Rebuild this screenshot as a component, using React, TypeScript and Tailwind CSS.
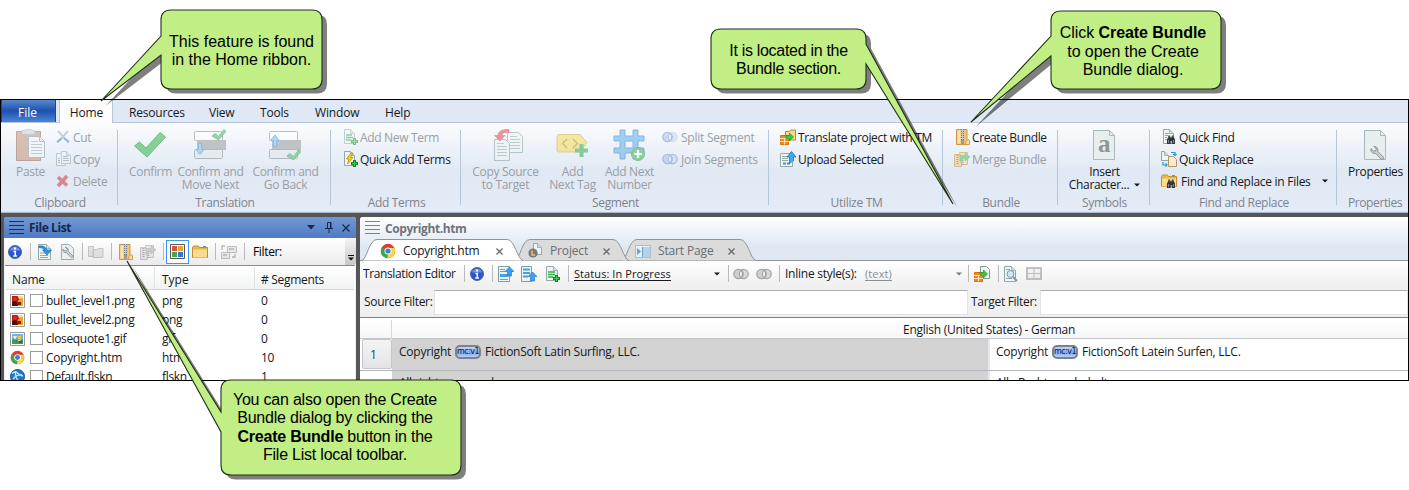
import type { ReactNode } from "react";

type Kids = { children?: ReactNode };

/* ---------- icon canvas ---------- */
function Ico({ w = 16, h = 16, c = "", dim = false, children }: Kids & { w?: number; h?: number; c?: string; dim?: boolean }) {
  return (
    <svg width={w} height={h} viewBox={`0 0 ${w} ${h}`} className={`shrink-0 ${dim ? "opacity-50" : ""} ${c}`} fill="none">
      {children}
    </svg>
  );
}

/* ---------- shared drawings ---------- */
const Zip = () => (
  <>
    <path d="M.5.5h10.500v15H.5z" fill="#efc577" stroke="#c9964a" />
    <path d="M1.500 1.500h3v13h-3z" fill="#fbe2ae" />
    <path d="M9.500 15.500l.5-3 2-2 1.500 1v4z" fill="#f9dfa6" stroke="#d09a45" />
    <path d="M6.500 0v11" stroke="#6d737c" strokeWidth="3" strokeDasharray="1 1" />
    <path d="M6.500 0v11" stroke="#c5c9cf" strokeWidth="1" />
    <path d="M5.500 11h2v3.500h-2z" fill="#a2a7ae" stroke="#70757d" strokeWidth=".5" />
  </>
);
const ZipMerge = () => (
  <>
    <path d="M.5 3.500h7v12h-7z" fill="#f3cd80" stroke="#c98f2c" />
    <path d="M5.500 1.500h8v12h-6z" fill="#f8dc9b" stroke="#c98f2c" />
    <path d="M3.500 4v9M8.500 5v10" stroke="#5d6470" strokeWidth="2" strokeDasharray="1 1" />
    <path d="M6 4.500h5V2l5 4-5 4V7.500H8.500V10H6z" fill="#45c25a" stroke="#2a9a3c" strokeWidth=".6" />
  </>
);
const Page = ({ x = 1, y = 0, w = 12, h = 15 }: { x?: number; y?: number; w?: number; h?: number }) => (
  <>
    <path d={`M${x + 0.5} ${y + 0.5}h${w - 5}l4 4v${h - 5}h-${w - 1}z`} fill="#eef5f4" stroke="#8fa8a8" />
    <path d={`M${x + w - 4.5} ${y + 0.5}v4h4`} fill="#cfdedd" stroke="#8fa8a8" strokeWidth=".8" />
  </>
);
const GreenPlus = () => (
  <>
    <path d="M10.500 9v7M7 12.500h7" stroke="#12851c" strokeWidth="3" />
    <path d="M10.500 10v5M8 12.500h5" stroke="#3ed04a" strokeWidth="1" />
  </>
);
const Scissors = () => (
  <>
    <path d="M2 1l8 9M12 1L4 10" stroke="#909aa5" strokeWidth="1.800" />
    <path d="M4 9.500l-2.500 3M10 9.500l2.500 3M6 8L1 12M8 8l5 4" stroke="#2f6fc4" strokeWidth="1.700" />
  </>
);
const Copies = () => (
  <>
    <Page x={0} y={2} w={10} h={13} />
    <Page x={5} y={0} w={10} h={13} />
    <path d="M7 5.500h5M7 7.500h6M7 9.500h6M2 7.500h2M2 9.500h2M2 11.500h2" stroke="#7b9292" />
  </>
);
const RedX = () => <path d="M2 3l9 8.500M11 2L2 12" stroke="#d0262c" strokeWidth="3.600" />;
const Bars = () => (
  <>
    <path d="M.5 6.500h8v9h-8z" fill="#f28a1e" stroke="#d9700f" />
    <path d="M0 9.500h9M0 12.500h9M4.500 9.500v6" stroke="#fde3c4" />
  </>
);
const TranslateTm = () => (
  <>
    <path d="M5.500 2.500h4l1-1.500h5v10h-10z" fill="#f9dc8c" stroke="#b88a2b" />
    <Bars />
    <path d="M6 6.500h3.500V4l4 4-4 4V9.500H6z" fill="#3ec43f" stroke="#1c8726" strokeWidth=".6" />
  </>
);
const UploadSel = () => (
  <>
    <path d="M.5 2.500h12v13H.5z" fill="#eef5f4" stroke="#8fa8a8" />
    <path d="M2 5.500h6M2 7.500h6M2 9.500h6" stroke="#8fa8a8" />
    <path d="M3 11.500h3v2H3zM7 11.500h3v2H7z" fill="#3b8fe0" />
    <path d="M9.500 13V6H7L11.500 .5 16 6h-2.500v4" fill="#42a5ee" stroke="#1b70bd" strokeWidth=".8" />
  </>
);
const Rings = ({ gray = false, cut = false }: { gray?: boolean; cut?: boolean }) => (
  <>
    <circle cx="10.500" cy="6" r="4.700" fill={gray ? "#d9d9d9" : "#c3d3f5"} stroke={cut ? "#c4cedf" : gray ? "#a5a5a5" : "#6c86d6"} strokeWidth="1.300" />
    <circle cx="5.500" cy="6" r="4.700" fill={gray ? "#cfcfcf" : "#a8bdf0"} stroke={gray ? "#a5a5a5" : "#6c86d6"} strokeWidth="1.300" />
    <path d="M8 2c2 2.500 2 5.500 0 8-2-2.500-2-5.500 0-8z" fill="#f4f6fa" stroke={gray ? "#999" : "#6c86d6"} />
  </>
);
const Binoculars = () => (
  <>
    <path d="M7 8.500l.5-2H9l.5 2h1l.5-2h1.500l.5 2 1 2V15h-3.300v-3h-1v3H6v-4.500z" fill="#33373c" />
    <path d="M7.500 11v3M12.500 11v3M8 7.500v1M12 7.500v1" stroke="#8b929b" strokeWidth=".9" />
  </>
);
const Folder = () => (
  <>
    <path d="M.5 3.500l1-1.500h5l1 1.500h8v10H.5z" fill="#e9b94f" stroke="#bf8f31" />
    <path d="M1 5.500h14v8H1z" fill="#fbdc8e" />
    <path d="M11 2.500h3" stroke="#4a9be0" />
  </>
);
const Wrench = () => (
  <path d="M4 1.500L6.500 4 5.500 6 3.500 6 1 3.800C.4 6.500 2.500 9 5.500 8.200L11 14c1.500 1.500 3.500-.5 2.200-2L7.700 6.500C8.700 3.800 6.500 1 4 1.500z" fill="#cdd2d4" stroke="#7b8487" strokeWidth=".9" />
);
const Chrome = () => (
  <>
    <circle cx="8" cy="8" r="7.200" fill="#e23c2f" />
    <path d="M8 8L1.800 4.400A7.200 7.200 0 0 0 7.500 15.200z" fill="#3da746" />
    <path d="M8 8h7a7.200 7.200 0 0 1-7.500 7.200z" fill="#fbd33d" />
    <path d="M8 5h6.500A7.200 7.200 0 0 1 15 8L8 9z" fill="#fbd33d" />
    <circle cx="8" cy="8" r="3.500" fill="#fff" />
    <circle cx="8" cy="8" r="2.600" fill="#3c80dc" />
  </>
);
const Info = () => (
  <>
    <circle cx="7" cy="7" r="6.500" fill="#2a57c8" stroke="#4a66b8" />
    <path d="M2 5.500a5.200 5.200 0 0 1 10 0z" fill="#6f94e6" />
    <path d="M7 2.500v2" stroke="#fff" strokeWidth="2" />
    <path d="M5.500 6.500H7.300V11M5.300 11h3.600" stroke="#fff" strokeWidth="1.500" />
  </>
);
const Burger = ({ blue = false }: { blue?: boolean }) => (
  <Ico w={15} h={14}>
    <path d="M0 .5h15M0 4.500h15M0 8.500h15M0 12.500h15" stroke={blue ? "#16305f" : "#7c838b"} />
  </Ico>
);

/* ---------- ribbon ---------- */
function Big({ w, icon, lines, on = false, arrow = false, m = "" }: { w: string; icon: ReactNode; lines: string[]; on?: boolean; arrow?: boolean; m?: string }) {
  return (
    <div className={`flex flex-col items-center ${w} ${m} ${on ? "text-[#15181c]" : "text-[#9a9ea5]"}`}>
      <div className="mt-[6px] flex h-8 items-center">{icon}</div>
      <div className="mt-[4px] pl-px text-center leading-[13px] whitespace-nowrap">
        {lines.map((l, i) => (
          <div key={l} className="flex items-center justify-center">
            {l}
            {arrow && i === 1 && <Caret c="ml-[5px]" />}
          </div>
        ))}
      </div>
    </div>
  );
}
const Caret = ({ c = "" }: { c?: string }) => (
  <Ico w={6} h={4} c={c}>
    <path d="M0 .5h6L3 3.500z" fill="currentColor" />
  </Ico>
);
function Small({ icon, text, on = false, c = "", arrow = false }: { icon: ReactNode; text: string; on?: boolean; c?: string; arrow?: boolean }) {
  return (
    <div className={`flex h-[22px] items-center gap-[2px] whitespace-nowrap ${on ? "text-[#15181c]" : "text-[#9a9ea5]"}`}>
      {icon}
      <span className={`pt-px ${c}`}>{text}</span>
      {arrow && <Caret c="ml-[9px]" />}
    </div>
  );
}
function Group({ w, label, last = false, children }: Kids & { w: string; label: string; last?: boolean }) {
  return (
    <>
      <div className={`flex shrink-0 flex-col ${w}`}>
        <div className="flex h-[72px]">{children}</div>
        <div className={`h-4 text-center leading-4 whitespace-nowrap text-[#7d838b] ${last ? "pl-[6px] tracking-[-0.4px]" : "pl-[2px]"}`}>{label}</div>
      </div>
      {!last && <div className="mt-[7px] h-[75px] w-px shrink-0 bg-[#b5c6d8]" />}
    </>
  );
}

function Ribbon() {
  return (
    <div className="flex h-[88px] shrink-0 bg-linear-to-b from-[#fbfcfe] via-[#e0e9f3] via-55% to-[#e4ebf7] text-[12px] tracking-[-0.32px]">
      <Group w="w-[116px]" label="Clipboard">
        <Big w="w-[42px]" m="ml-[8px]" lines={["Paste"]} icon={
          <Ico w={29} h={32} dim>
            <path d="M.5 2.500h24v29H.5z" fill="#c08a6e" stroke="#8f5a40" />
            <path d="M6 1.500h3l1-1.500h5l1 1.500h3v4H6z" fill="#c9ced4" stroke="#8b929a" strokeWidth=".7" />
            <path d="M12.500 7.500h11l5 5v16h-16z" fill="#f4f8f9" stroke="#7f9295" />
            <path d="M23.500 7.500v5h5" stroke="#7f9295" />
            <path d="M15 12.500h7M15 15.500h11M15 18.500h11M15 21.500h11M15 24.500h11" stroke="#97a8ab" />
          </Ico>} />
        <div className="ml-[5px] pt-[3px]">
          <Small icon={<Ico w={15} h={14} dim><Scissors /></Ico>} text="Cut" />
          <Small icon={<Ico w={15} h={16} dim><Copies /></Ico>} text="Copy" />
          <Small icon={<Ico w={15} h={14} dim><RedX /></Ico>} text="Delete" />
        </div>
      </Group>
      <Group w="w-[212px]" label="Translation">
        <Big w="w-[46px]" m="ml-[9px]" lines={["Confirm"]} icon={
          <Ico w={32} h={26} c="opacity-60">
            <path d="M.5 14l5-4 6.500 6L26 .5l5.500 4.500L13 25z" fill="#3fbc55" stroke="#24933a" />
          </Ico>} />
        <Big w="w-[70px]" m="ml-[2px]" lines={["Confirm and", "Move Next"]} icon={
          <Ico w={32} h={32} dim>
            <rect x=".5" y="2.500" width="28" height="9" rx="1" fill="#fff" stroke="#7e8489" />
            <rect x="3.500" y="11.500" width="28" height="9" fill="#909498" stroke="#8d9195" />
            <rect x=".5" y="20.500" width="28" height="9" rx="1" fill="#e2e6e9" stroke="#7e8489" />
            <path d="M4.500 14.500h3v6h2.500L6 25.500l-4-5h2.500z" fill="#6dbdf3" stroke="#2b84cf" />
            <path d="M18 7l3-2.500 3.500 3L30 .5l2 2L24.500 11z" fill="#2fbc4b" stroke="#17832c" strokeWidth=".8" />
          </Ico>} />
        <Big w="w-[70px]" m="ml-[5px]" lines={["Confirm and", "Go Back"]} icon={
          <Ico w={32} h={32} dim>
            <rect x=".5" y="2.500" width="28" height="9" rx="1" fill="#fff" stroke="#7e8489" />
            <rect x="3.500" y="11.500" width="28" height="9" fill="#909498" stroke="#8d9195" />
            <rect x=".5" y="20.500" width="28" height="9" rx="1" fill="#e2e6e9" stroke="#7e8489" />
            <path d="M4.500 17.500h3v-6h2.500L6 6l-4.500 5.500h3z" fill="#6dbdf3" stroke="#2b84cf" />
            <path d="M18 27l3-2.500 3.500 3L30 20.500l2 2L24.500 31z" fill="#2fbc4b" stroke="#17832c" strokeWidth=".8" />
          </Ico>} />
      </Group>
      <Group w="w-[129px]" label="Add Terms">
        <div className="ml-[13px] pt-[3px]">
          <Small icon={<Ico w={14} h={16} dim><Page x={0} w={11} /><path d="M2 6h6M2 8.500h7M2 11h5" stroke="#2fae42" strokeWidth="1.500" /><GreenPlus /></Ico>} text="Add New Term" />
          <Small on icon={<Ico w={14} h={16}><Page x={0} w={11} /><path d="M7 2L2.500 8H5l-1.500 5L9 6.500H6.500L9 2z" fill="#f9d51f" stroke="#b98c09" strokeWidth=".8" /><GreenPlus /></Ico>} text="Quick Add Terms" />
        </div>
      </Group>
      <Group w="w-[307px]" label="Segment">
        <Big w="w-[70px]" m="ml-[9px]" lines={["Copy Source", "to Target"]} icon={
          <Ico w={30} h={32} dim c="ml-[7px]">
            <path d="M13.500 3.500h11l4 4v16h-15z" fill="#eef5f4" stroke="#7f9797" />
            <path d="M16 7.500h7M16 10.500h10M16 13.500h10M16 16.500h10M16 19.500h10" stroke="#8fa5a5" />
            <path d="M.5 10.500h11l4 4v17H.5z" fill="#eef5f4" stroke="#7f9797" />
            <path d="M3 14.500h7M3 17.500h10M3 20.500h10M3 23.500h10M3 26.500h10" stroke="#8fa5a5" />
            <path d="M15 .5C9 0 4 2 4 6.500H.5L6 12l5-5.500H8C8 3.500 11 3 15 4z" fill="#e0343c" stroke="#b3161f" strokeWidth=".6" />
          </Ico>} />
        <Big w="w-[52px]" m="ml-[6px]" lines={["Add", "Next Tag"]} icon={
          <Ico w={33} h={26} dim>
            <path d="M3 2.500h21l7 8-7 9.500H3q-2 0-2-2v-13q0-2.500 2-2.500z" fill="#f4d94b" stroke="#cda62a" />
            <path d="M11 7l-4.500 4.500L11 16M17 7l4.500 4.500L17 16" stroke="#a3841e" strokeWidth="1.300" />
            <path d="M25.500 12v13M19 18.500h13" stroke="#27a53d" strokeWidth="4" />
          </Ico>} />
        <Big w="w-[54px]" m="ml-[4px]" lines={["Add Next", "Number"]} icon={
          <Ico w={32} h={32} dim>
            <path d="M7 1h5v6h8V1h5v6h6v5h-6v7h6v5h-6v6h-5v-6h-8v6H7v-6H1v-5h6v-7H1V7h6zM12 12v7h8v-7z" fill="#4ba9ee" fillRule="evenodd" stroke="#2475c2" />
            <circle cx="25" cy="25" r="6.500" fill="#2fb046" stroke="#1a8330" />
            <path d="M25 21v8M21 25h8" stroke="#fff" strokeWidth="2.200" />
          </Ico>} />
        <div className="ml-[6px] pt-[3px]">
          <Small c="ml-px tracking-[-0.24px]" icon={<Ico w={16} h={12} dim><Rings cut /></Ico>} text="Split Segment" />
          <Small c="ml-px tracking-[-0.16px]" icon={<Ico w={16} h={12} dim><Rings /></Ico>} text="Join Segments" />
        </div>
      </Group>
      <Group w="w-[173px]" label="Utilize TM">
        <div className="ml-[11px] pt-[3px]">
          <Small on icon={<Ico><TranslateTm /></Ico>} text="Translate project with TM" />
          <Small on icon={<Ico><UploadSel /></Ico>} text="Upload Selected" />
        </div>
      </Group>
      <Group w="w-[114px]" label="Bundle">
        <div className="ml-[11px] pt-[3px]">
          <Small on c="tracking-[-0.38px]" icon={<Ico w={14} c="ml-[2px]"><Zip /></Ico>} text="Create Bundle" />
          <Small c="tracking-[-0.35px]" icon={<Ico dim><ZipMerge /></Ico>} text="Merge Bundle" />
        </div>
      </Group>
      <Group w="w-[91px]" label="Symbols">
        <Big on arrow w="w-[70px]" m="ml-[11px]" lines={["Insert", "Character..."]} icon={
          <div className="relative">
            <Ico w={22} h={30}>
              <path d="M.5.5h16l5 5v24H.5z" fill="#e6efee" stroke="#a5bab9" />
              <path d="M16.500.5v5h5" stroke="#a5bab9" />
            </Ico>
            <span className="absolute inset-0 text-center font-['Liberation_Serif',serif] text-[25px] leading-[28px] font-bold text-[#8f9596]">a</span>
          </div>} />
      </Group>
      <Group w="w-[186px]" label="Find and Replace">
        <div className="ml-[11px] pt-[3px]">
          <Small on icon={<Ico><Page x={2} w={11} /><path d="M4 4.500h4M4 6.500h3M4 8.500h2M4 10.500h2" stroke="#8fa8a8" /><Binoculars /></Ico>} text="Quick Find" />
          <Small on icon={<Ico><Page x={0} y={0} w={8} h={10} /><path d="M7.500 5.500h5l3 3v7h-8z" fill="#f5ecd8" stroke="#b5945c" /><path d="M10 1.500h4v3M12 3l2 1.500L15.500 3M2 11v3h4M4.500 12L6 14l-1.500 1.500" stroke="#249bd6" strokeWidth="1.200" /></Ico>} text="Quick Replace" />
          <Small on arrow c="ml-[2px] tracking-[-0.28px]" icon={<Ico><Folder /><Binoculars /></Ico>} text="Find and Replace in Files" />
        </div>
      </Group>
      <Group w="w-[70px]" label="Properties" last>
        <Big on w="w-[60px]" m="ml-[8px]" lines={["Properties"]} icon={
          <Ico w={22} h={30}>
            <path d="M.5.5h16l5 5v24H.5z" fill="#e6efee" stroke="#a5bab9" />
            <path d="M16.500.5v5h5" stroke="#a5bab9" />
            <g transform="translate(6 15)"><Wrench /></g>
          </Ico>} />
      </Group>
    </div>
  );
}

function MenuTabs() {
  return (
    <div className="flex h-[23px] shrink-0 border-b border-[#b4c6d8] bg-[#dfe8f4] text-[12px] leading-[25px] text-[#15181c]">
      <div className="w-[55px] border-x border-[#1d4796] bg-linear-to-b from-[#5b86cf] via-[#1d51ad] via-50% to-[#4a86dc] pr-[2px] text-center text-white">File</div>
      <div className="ml-[3px] h-[23px] w-[54px] border-x border-[#b4c6d8] bg-[#fdfdfe] pl-px text-center tracking-[-0.1px]">Home</div>
      <div className="ml-[16px] w-[80px] tracking-[-0.2px]">Resources</div>
      <div className="w-[51px] tracking-[-0.2px]">View</div>
      <div className="w-[55px] tracking-[-0.2px]">Tools</div>
      <div className="w-[70px] tracking-[-0.15px]">Window</div>
      <div className="tracking-[-0.15px]">Help</div>
    </div>
  );
}

/* ---------- file list ---------- */
const Bar = ({ c = "" }: { c?: string }) => <div className={`h-[17px] w-px shrink-0 bg-[#b9babc] ${c}`} />;

const Picture = () => (
  <Ico w={15} h={14}>
    <path d="M.5.5h14v13H.5z" fill="#fff" stroke="#9a9a9a" />
    <path d="M2 2h11v10H2z" fill="#b91c12" />
    <path d="M2 8l4-1 2 5H2z" fill="#4b1006" />
    <path d="M8 6.500l5-4V12H8z" fill="#f0a322" />
    <circle cx="5" cy="5" r="2" fill="#e3261b" />
    <path d="M7.500 2H13v2l-4 1z" fill="#f5d9b0" />
    <path d="M8 8h3v3H8z" fill="#6c2307" />
  </Ico>
);
const Gif = () => (
  <Ico w={15} h={14}>
    <path d="M.5.5h14v13H.5z" fill="#fff" stroke="#9a9a9a" />
    <path d="M2 2h11v6H2z" fill="#6fb4ee" />
    <path d="M2 12V8l3-2 4 3 4-2v5z" fill="#3f9d45" />
    <path d="M3 4h4l-2 4z" fill="#e8f1fb" />
    <path d="M8 4h3v3H8z" fill="#f6c53a" />
    <path d="M9 9h3v2H9z" fill="#3450a8" />
  </Ico>
);
const Skin = () => (
  <Ico w={15} h={15}>
    <circle cx="7.500" cy="7.500" r="7" fill="#1f78d0" stroke="#11519a" />
    <path d="M2 4.500q3-3 6 0t5 2M3 10q4-5 9-4M6 2q-2 5 3 11" stroke="#bfe4fb" strokeWidth="1.400" />
  </Ico>
);
const files = [
  { name: "bullet_level1.png", type: "png", n: "0", icon: <Picture /> },
  { name: "bullet_level2.png", type: "png", n: "0", icon: <Picture /> },
  { name: "closequote1.gif", type: "gif", n: "0", icon: <Gif /> },
  { name: "Copyright.htm", type: "htm", n: "10", icon: <Ico w={15} h={15}><g transform="scale(.94)"><Chrome /></g></Ico> },
  { name: "Default.flskn", type: "flskn", n: "1", icon: <Skin /> },
];

function FileList() {
  return (
    <div className="flex w-[352px] shrink-0 flex-col overflow-hidden rounded-t-[3px] bg-[#f0f0f0]">
      <div className="flex h-[21px] shrink-0 items-center bg-linear-to-b from-[#7498d4] to-[#4f7bc3] pl-[5px] text-[12px] text-[#14284e]">
        <Burger blue />
        <span className="ml-[5px] flex-1 pt-px font-bold tracking-[-0.4px]">File List</span>
        <Ico w={8} h={5} c="mr-[10px]"><path d="M0 0h8L4 4.500z" fill="#14284e" /></Ico>
        <Ico w={8} h={11} c="mr-[9px]"><path d="M2.500 6V.5h3.500V6M5.500 1v5M0 6.500h8M4 7v4" stroke="#14284e" /></Ico>
        <Ico w={8} h={8} c="mr-[6px]"><path d="M.5.5l7 7M7.500.5l-7 7" stroke="#14284e" strokeWidth="1.200" /></Ico>
      </div>
      <div className="flex h-[27px] shrink-0 items-center bg-linear-to-b from-white to-[#ebebeb] pl-[4px]">
        <Ico w={14} h={14}><Info /></Ico>
        <Bar c="ml-[8px] mr-[7px]" />
        <Ico w={15}><Page x={0} y={0} w={13} h={16} /><path d="M2 9h6M2 11.500h8M2 13.500h8" stroke="#8fa8a8" /><path d="M1 2q6-1 8 4h4.500L9 11 4.500 6H7Q5 3.500 1 3.500z" fill="#2f93e4" stroke="#1565b0" strokeWidth=".6" /></Ico>
        <Ico w={13} h={16} c="ml-[8px] mr-[8px]"><path d="M.5.500h8l4 4v11H.5z" fill="#eaf0f0" stroke="#9aaeae" /><g transform="translate(1 2) scale(.8)"><Wrench /></g></Ico>
        <Bar />
        <Ico w={16} h={14} c="ml-[5px] mr-[7px] grayscale" dim><path d="M.5 1.500h5v10h-5zM5 4.500h4l1-1h5v9H5z" fill="#c9c9c9" stroke="#8f8f8f" /></Ico>
        <Bar />
        <Ico w={14} c="ml-[7px]"><Zip /></Ico>
        <Ico c="mx-[7px] grayscale" dim><ZipMerge /></Ico>
        <Bar />
        <div className="ml-[2px] flex h-6 w-[23px] shrink-0 items-center justify-center border border-[#3a96f2] bg-white">
          <Ico w={15} h={15}>
            <path d="M.5.5h14v14H.5z" fill="#fdfdfd" stroke="#54585e" />
            <path d="M2 2h5v5H2z" fill="#d94e45" /><path d="M8 2h5v5H8z" fill="#e6a432" />
            <path d="M2 8h5v5H2z" fill="#48a84b" /><path d="M8 8h5v5H8z" fill="#3b72d8" />
            <path d="M7.500 2v11M2 7.500h11" stroke="#fff" />
          </Ico>
        </div>
        <Ico c="ml-[3px] mr-[7px]"><Folder /></Ico>
        <Bar />
        <Ico w={16} h={15} c="ml-[5px] mr-[7px]" dim><path d="M6.500 2.500h9v6h-9zM.5 8.500h8v6h-8z" fill="#d9d9d9" stroke="#868686" /><path d="M8 5h5M2 11h4M1 6V2h3M14 10v3h-3" stroke="#777" strokeWidth="1.300" /></Ico>
        <Bar c="mr-[8px]" />
        <span className="flex-1 text-[12px] tracking-[-0.35px]">Filter:</span>
        <div className="flex h-full w-[11px] flex-col items-center justify-end rounded-br bg-linear-to-b from-[#f4f4f4] to-[#c8c8c8] pb-1">
          <Ico w={6} h={6}><path d="M0 .5h6" stroke="#111" /><path d="M0 2.500h6L3 5.500z" fill="#111" /></Ico>
        </div>
      </div>
      <div className="mx-px flex-1 border-t border-[#8b8b8b] bg-white pt-px text-[12px] tracking-[-0.32px] text-[#15181c]">
        <div className="mx-px flex h-[23px] border-b border-[#d5d5d5] bg-linear-to-b from-white to-[#f1f2f3] leading-[25px] tracking-[0px]">
          <div className="w-[149px] border-r border-[#e0e2e4] pl-[6px] tracking-[-0.15px]">Name</div>
          <div className="w-[100px] border-r border-[#e0e2e4] pl-[7px]">Type</div>
          <div className="pl-[6px] tracking-[-0.3px]"># Segments</div>
        </div>
        <div className="pt-[1px]">
          {files.map((f) => (
            <div key={f.name} className="flex h-[19px] items-center leading-[19px]">
              <div className="flex w-[25px] justify-center">{f.icon}</div>
              <div className="h-[13px] w-[13px] border border-[#9b9b9b] bg-white" />
              <div className="w-[119px] pl-[3px]">{f.name}</div>
              <div className="w-[99px]">{f.type}</div>
              <div>{f.n}</div>
            </div>
          ))}
        </div>
      </div>
    </div>
  );
}

/* ---------- editor ---------- */
function DocTab({ w, active = false, m = "", icon, text, gap, z }: { w: number; active?: boolean; m?: string; icon: ReactNode; text: string; gap: string; z: string }) {
  return (
    <div className={`relative flex h-[22px] shrink-0 items-center ${m} ${z} ${active ? "text-[#15181c]" : "text-[#6b6d70]"}`} style={{ width: w }}>
      <svg width={w} height="22" className="absolute inset-0" fill="none">
        <path d={`M0 21.500C5 20 7 .5 15 .5H${w - 17}C${w - 9} .5 ${w - 7} 20 ${w - 1} 21.500`} fill={active ? "#fff" : "#dbdbdb"} stroke="#909397" />
      </svg>
      <div className="relative flex flex-1 items-center pt-[2px] text-[12px]">
        {icon}
        <span className={`ml-[7px] ${gap}`}>{text}</span>
        <Ico w={7} h={7}><path d="M.5.5l6 6M6.500.5l-6 6" stroke="#66696d" strokeWidth="1.300" /></Ico>
      </div>
    </div>
  );
}

const McTag = () => (
  <span className="mx-[4px] mt-px flex h-[14px] w-[26px] items-center justify-center rounded-[5px] border-2 border-[#7d8188] bg-linear-to-b from-[#c3d8fb] via-[#7fa9f2] to-[#b2cdfb] font-['DejaVu_Sans',sans-serif] text-[8px] leading-none tracking-[-0.5px] text-[#0d1c3c]">mc:v1</span>
);

function Editor() {
  return (
    <div className="flex min-w-0 flex-1 flex-col overflow-hidden rounded-tl-[3px] bg-[#f0f0f0] text-[12px] tracking-[-0.32px] text-[#15181c]">
      <div className="h-[44px] shrink-0 border-b border-[#909397] bg-linear-to-b from-[#fdfeff] via-[#dfe8f2] via-70% to-[#dfe8f2]">
        <div className="flex h-[22px] items-center pl-[5px] font-bold text-[#6e747b]">
          <Burger />
          <span className="ml-[5px] pt-px tracking-[-0.42px]">Copyright.htm</span>
        </div>
        <div className="flex h-[22px] pl-[2px]">
          <DocTab w={162} active z="z-20" gap="w-[93px] tracking-[-0.3px]" text="Copyright.htm" icon={<Ico w={16} c="ml-[18px]"><Chrome /></Ico>} />
          <DocTab w={115} m="-ml-[9px]" z="z-10" gap="w-[53px] tracking-[-0.15px]" text="Project" icon={
            <Ico w={16} c="ml-[12px]"><Page x={6} y={0} w={9} h={12} /><circle cx="6" cy="10" r="4.600" fill="#77787b" /><path d="M5 7.500v4.500h3" stroke="#e8c27d" strokeWidth="1.500" /></Ico>} />
          <DocTab w={135} m="-ml-[8px]" z="z-0" gap="w-[70px] tracking-[-0.15px]" text="Start Page" icon={
            <Ico w={16} h={13} c="ml-[13px]"><path d="M.5.5h15v12H.5z" fill="#e9f0f4" stroke="#a9bfcd" /><path d="M8 2h7v10H8z" fill="#b8d3e6" /><path d="M2 3v7l4-3.500z" fill="#5aa8dd" /><path d="M7.500 2v10" stroke="#5aa8dd" /></Ico>} />
        </div>
      </div>
      <div className="flex h-[26px] shrink-0 items-center bg-linear-to-b from-white to-[#efefef] pb-px pl-[3px] whitespace-nowrap">
        <span className="w-[101px] tracking-[-0.38px]">Translation Editor</span>
        <Bar c="h-[15px]" />
        <Ico w={14} h={14} c="ml-[5px] mr-[8px]"><Info /></Ico>
        <Bar />
        <Ico w={16} c="ml-[5px]"><path d="M.5.5h11v15H.5z" fill="#eaf4f6" stroke="#7f9da6" /><path d="M2 3.500h5M2 5.500h5M2 13.500h8" stroke="#7f9da6" /><path d="M2 8h8v3H2z" fill="#46a2e4" /><path d="M9.500 10V5.500H7L11.500 1 16 5.500h-2.500V10z" fill="#3f9fe8" stroke="#1b6db6" strokeWidth=".6" /></Ico>
        <Ico w={16} c="ml-[7px]"><path d="M.5.5h10v15H.5z" fill="#eaf4f6" stroke="#7f9da6" /><path d="M2 2.500h7v2H2zM2 6h7v2H2zM2 9.500h5v2H2z" fill="#46a2e4" /><path d="M9.500 15v-4.500H7L11.500 6l4.500 4.500h-2.500V15z" fill="#3f9fe8" stroke="#1b6db6" strokeWidth=".6" /></Ico>
        <Ico w={14} c="ml-[9px] mr-[8px]"><Page x={0} w={12} /><path d="M2 6h7M2 8.500h7M2 11h5" stroke="#2fae42" strokeWidth="1.400" /><GreenPlus /></Ico>
        <Bar />
        <span className="ml-[5px] w-[140px] pt-px text-[11px] leading-[13px] tracking-[0.08px]"><span className="inline-block border-b border-[#15181c]">Status: In Progress</span></span>
        <Caret />
        <Bar c="ml-[8px] mr-[4px]" />
        <Ico w={16} h={12}><Rings gray /></Ico>
        <Ico w={16} h={12} c="ml-[7px]"><Rings gray /></Ico>
        <Bar c="ml-[7px] mr-[5px]" />
        <span className="w-[80px] tracking-[-0.25px]">Inline style(s):</span>
        <span className="w-[91px] pt-px text-[11px] leading-[13px] tracking-[0.1px] text-[#8b8e92]"><span className="inline-block border-b border-[#8b8e92]">(text)</span></span>
        <Caret c="text-[#777]" />
        <Bar c="ml-[6px] mr-[5px]" />
        <Ico><path d="M6.500.5h6l3 3v9h-9z" fill="#eef5f4" stroke="#7f9d8d" /><Bars /><path d="M6 6.500h3.500V4l4 4-4 4V9.500H6z" fill="#3ec43f" stroke="#1c8726" strokeWidth=".6" /></Ico>
        <Bar c="ml-[8px] mr-[5px]" />
        <Ico w={14}><Page x={0} w={12} h={16} /><path d="M2 3.500h4M2 12.500h6" stroke="#8fa8a8" /><circle cx="6.500" cy="8" r="3.500" fill="#cfe6f3" stroke="#8197a5" /><path d="M9 11l4 4" stroke="#8a929a" strokeWidth="2" /></Ico>
        <Ico w={16} h={13} c="ml-[8px]" dim><path d="M1 1h14v11H1z" fill="#e8e8e8" stroke="#888" strokeWidth="2" /><path d="M8 1v11M1 6.500h14" stroke="#888" /></Ico>
      </div>
      <div className="flex h-[30px] shrink-0 items-center pl-[4px] whitespace-nowrap">
        <span className="w-[70px] tracking-[-0.32px]">Source Filter:</span>
        <div className="h-[25px] w-[534px] border border-[#e2e3ea] border-t-[#abadb3] bg-white" />
        <span className="ml-[3px] w-[69px] tracking-[-0.3px]">Target Filter:</span>
        <div className="h-[25px] flex-1 border border-[#e2e3ea] border-t-[#abadb3] bg-white" />
      </div>
      <div className="flex flex-1 flex-col overflow-hidden border-t border-[#77808c] bg-white pt-[2px]">
        <div className="flex h-[19px] shrink-0 border-b border-[#c3c7cc] bg-linear-to-b from-white to-[#f6f6f7] leading-[19px]">
          <div className="w-[32px] border-r border-[#d6d8db]" />
          <div className="pl-[511px] tracking-[-0.26px] whitespace-nowrap">English (United States) - German</div>
        </div>
        <div className="flex h-[32px] shrink-0 border-b border-[#b4b8be] tracking-[-0.24px]">
          <div className="ml-[2px] h-[30px] w-[30px] rounded-[2px] border border-[#c3c7cc] bg-linear-to-b from-[#f4f4f5] to-[#e3e4e6] pl-[7px] leading-[30px] text-[#203a86]">1</div>
          <div className="flex w-[596px] bg-[#d2d2d2] pt-[5px] pl-[7px] leading-[15px]">Copyright <McTag /> FictionSoft Latin Surfing, LLC.</div>
          <div className="w-[2px] bg-[#e4e9ef]" />
          <div className="flex flex-1 pt-[5px] pl-[6px] leading-[15px] whitespace-nowrap">Copyright <McTag /> FictionSoft Latein Surfen, LLC.</div>
        </div>
        <div className="flex h-[32px] shrink-0">
          <div className="w-[32px]" />
          <div className="w-[596px] bg-[#d2d2d2] pt-[4px] pl-[7px] leading-[15px]">All rights reserved.</div>
          <div className="w-[2px] bg-[#e4e9ef]" />
          <div className="flex-1 pt-[4px] pl-[6px] leading-[15px]">Alle Rechte vorbehalten.</div>
        </div>
      </div>
    </div>
  );
}

/* ---------- callouts ---------- */
const bubbles = [
  "M171 10H312Q322 10 322 20V79Q322 89 312 89H171Q161 89 161 79V55L101 101L161 36V20Q161 10 171 10Z",
  "M721 29H856Q866 29 866 39V44L953 204L866 64V79Q866 89 856 89H721Q711 89 711 79V39Q711 29 721 29Z",
  "M1061 11H1211Q1221 11 1221 21V79Q1221 89 1211 89H1061Q1051 89 1051 79V56L971 122L1051 36V21Q1051 11 1061 11Z",
  "M231 380H451Q461 380 461 390V465Q461 475 451 475H231Q221 475 221 465V432L127 261L221 412V390Q221 380 231 380Z",
];

function Callouts() {
  return (
    <div className="pointer-events-none absolute inset-0 z-30 font-['Liberation_Sans',Arial,sans-serif] text-[16px] leading-[18px] whitespace-nowrap text-black">
      <svg width="1409" height="490" className="absolute inset-0">
        {bubbles.map((d) => (
          <g key={d}>
            <path d={d} transform="translate(5 4.500)" fill="#000" fillOpacity=".5" />
            <path d={d} fill="#c1ee85" stroke="#22301a" strokeWidth="1.100" />
          </g>
        ))}
      </svg>
      <div className="absolute top-[33px] left-[161px] w-[161px] text-center">This feature is found<br />in the Home ribbon.</div>
      <div className="absolute top-[42px] left-[711px] w-[155px] text-center tracking-[-0.3px]">It is located in the<br />Bundle section.</div>
      <div className="absolute top-[24px] left-[1048px] w-[170px] text-center leading-[18.500px] tracking-[-0.06px]">Click <b>Create Bundle</b><br />to open the Create<br />Bundle dialog.</div>
      <div className="absolute top-[391px] left-[215px] w-[240px] text-center leading-[18.300px] tracking-[-0.22px]">You can also open the Create<br />Bundle dialog by clicking the<br /><b>Create Bundle</b> button in the<br />File List local toolbar.</div>
    </div>
  );
}

export default function App() {
  return (
    <div className="relative h-[490px] w-[1409px] overflow-hidden bg-white pt-[99px] font-['Open_Sans','Noto_Sans',sans-serif]">
      <div className="flex h-[282px] flex-col border border-black bg-[#555655]">
        <MenuTabs />
        <Ribbon />
        <div className="h-[2px] shrink-0 border-b border-[#a9bccf] bg-[#dce7f3]" />
        <div className="flex min-h-0 flex-1 gap-[4px] overflow-hidden pt-[4px] pl-[3px]">
          <FileList />
          <Editor />
        </div>
      </div>
      <Callouts />
    </div>
  );
}
